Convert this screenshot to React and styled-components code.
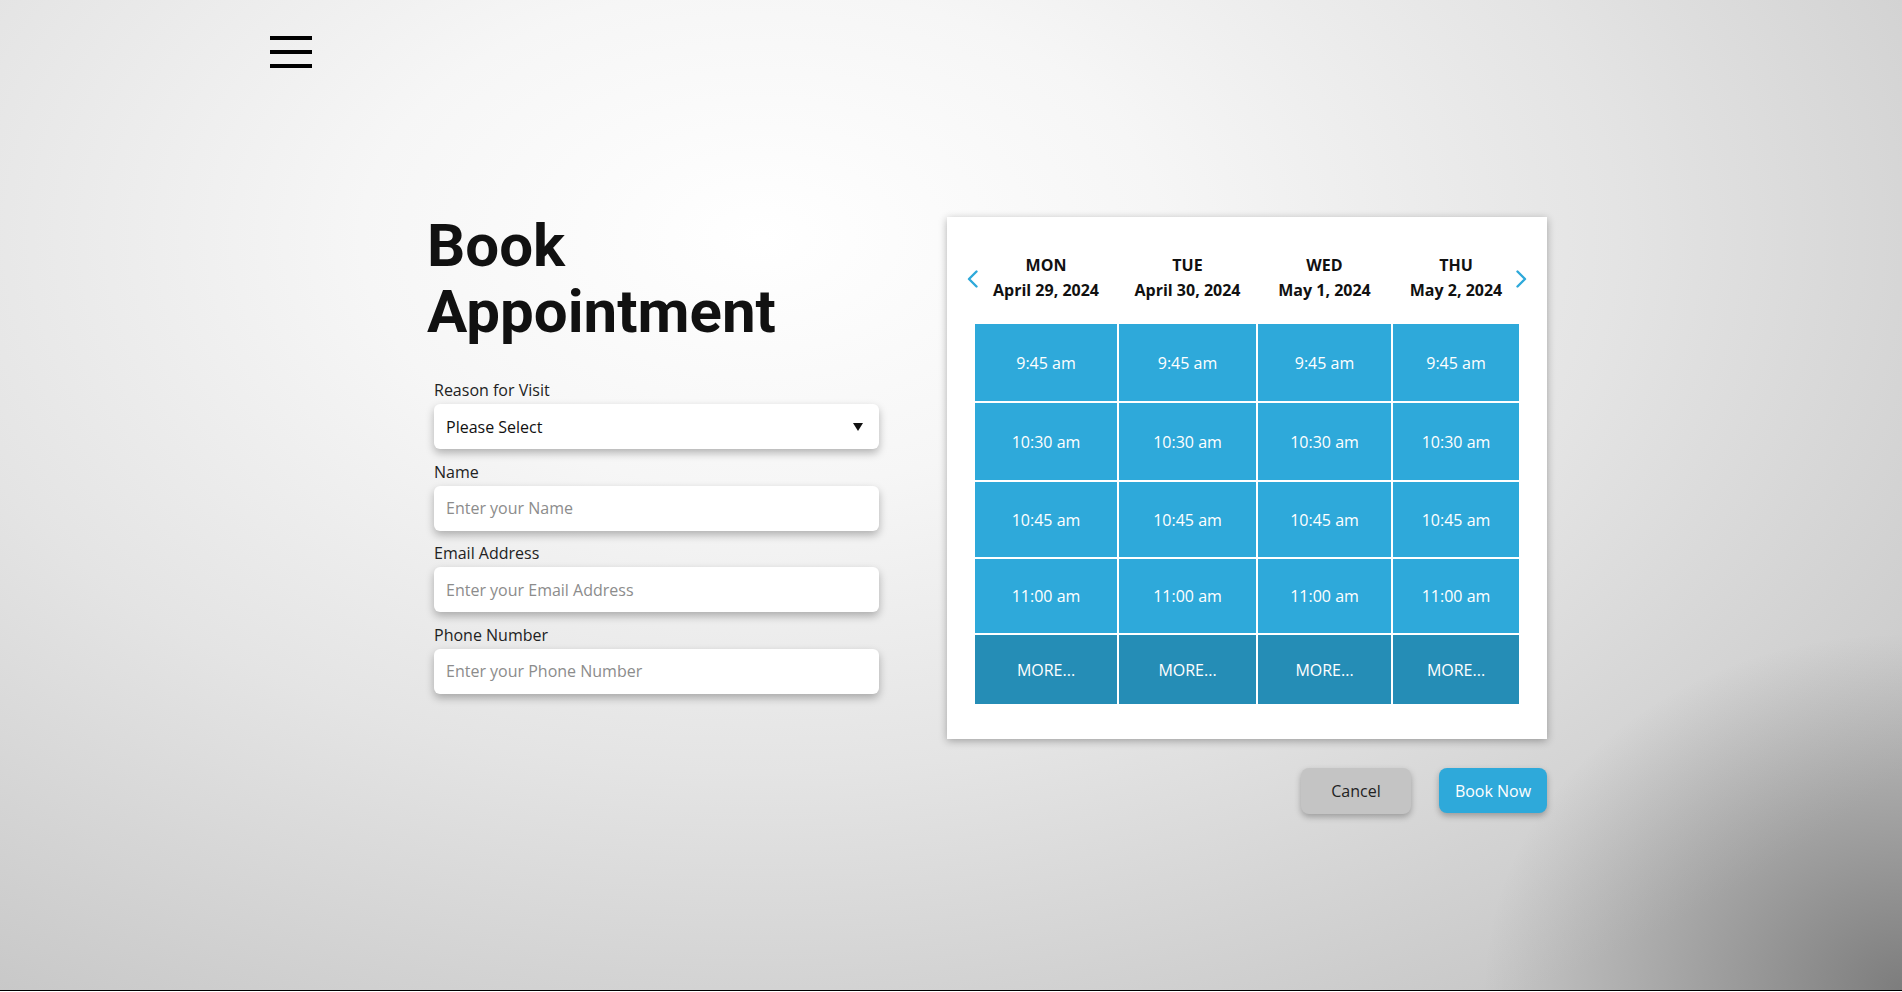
import React from 'react';
import styled, { createGlobalStyle } from 'styled-components';

const GlobalStyle = createGlobalStyle`
  * { box-sizing: border-box; }
  body {
    margin: 0;
    font-family: "Open Sans", "Liberation Sans", sans-serif;
    color: #1a1a1a;
  }
`;

const Page = styled.div`
  min-height: calc(100vh - 1px);
  border-bottom: 1px solid #000;
  background:
    radial-gradient(ellipse 22% 36% at 100% 100%, rgba(50, 50, 50, 0.5) 0%, rgba(50, 50, 50, 0) 100%),
    radial-gradient(ellipse 75% 90% at 40% 24%, #ffffff 0%, #f6f6f6 28%, #e4e4e4 60%, #c8c8c8 100%);
`;

const TopBar = styled.header`
  padding: 36px 0 0 270px;
`;

const MenuButton = styled.button`
  display: flex;
  flex-direction: column;
  gap: 10px;
  width: 42px;
  padding: 0;
  border: none;
  background: none;
  cursor: pointer;
`;

const MenuBar = styled.span`
  display: block;
  height: 4px;
  background: #000;
`;

const Main = styled.main`
  display: flex;
  align-items: flex-start;
  gap: 68px;
  margin: 149px 0 0 427px;
`;

const LeftCol = styled.section`
  width: 452px;
`;

const Title = styled.h1`
  margin: -4px 0 0;
  font-family: Roboto, "Liberation Sans", sans-serif;
  font-weight: 700;
  font-size: 60px;
  line-height: 66px;
  color: #111;
`;

const Form = styled.form`
  width: 445px;
  margin: 33px 0 0 7px;
`;

const Field = styled.div`
  margin-bottom: 10.5px;
`;

const Label = styled.label`
  display: block;
  margin-bottom: 2px;
  font-size: 16px;
  line-height: 24px;
  color: #222;
`;

const boxStyle = `
  width: 100%;
  height: 45px;
  border: none;
  border-radius: 6px;
  background: #fff;
  box-shadow: 0 4px 8px rgba(0, 0, 0, 0.28);
  font-family: "Open Sans", "Liberation Sans", sans-serif;
  font-size: 16px;
`;

const Input = styled.input`
  ${boxStyle}
  padding: 0 12px;
  color: #222;
  outline: none;

  &::placeholder {
    color: #8c8c8c;
  }
`;

const SelectBox = styled.div`
  ${boxStyle}
  display: flex;
  align-items: center;
  justify-content: space-between;
  padding: 0 16px 0 12px;
  color: #111;
  cursor: pointer;
`;

const Caret = styled.span`
  width: 0;
  height: 0;
  border-left: 5.5px solid transparent;
  border-right: 5.5px solid transparent;
  border-top: 8px solid #111;
`;

const RightCol = styled.section`
  display: flex;
  flex-direction: column;
  width: 600px;
`;

const Card = styled.div`
  position: relative;
  background: #fff;
  box-shadow: 0 2px 8px rgba(0, 0, 0, 0.3);
  padding: 36px 28px 35px;
`;

const Arrow = styled.button`
  position: absolute;
  top: 53px;
  ${(p) => (p.$side === 'left' ? 'left: 20px;' : 'right: 20px;')}
  padding: 0;
  border: none;
  background: none;
  cursor: pointer;
  line-height: 0;
`;

const Schedule = styled.div`
  display: grid;
  grid-template-columns: 142px 137px 133px 126px;
  grid-template-rows: auto 77px 77px 75px 74px 69px;
  gap: 2px;
`;

const DayHead = styled.div`
  margin-bottom: 19px;
  text-align: center;
  font-weight: 700;
  font-size: 16px;
  line-height: 25px;
  color: #111;
`;

const Slot = styled.button`
  display: flex;
  align-items: center;
  justify-content: center;
  border: none;
  padding: 0;
  background: ${(p) => (p.$more ? '#258db6' : '#2ea9da')};
  color: #fff;
  font-family: "Open Sans", "Liberation Sans", sans-serif;
  font-size: 16px;
  cursor: pointer;
`;

const ButtonRow = styled.div`
  display: flex;
  justify-content: flex-end;
  gap: 28px;
  margin-top: 29px;
`;

const ActionButton = styled.button`
  width: ${(p) => (p.$primary ? '108px' : '110px')};
  height: ${(p) => (p.$primary ? '45px' : '46px')};
  border: none;
  border-radius: 8px;
  background: ${(p) => (p.$primary ? '#2ea9da' : '#c4c4c4')};
  color: ${(p) => (p.$primary ? '#fff' : '#222')};
  box-shadow: 0 3px 6px rgba(0, 0, 0, 0.28);
  font-family: "Open Sans", "Liberation Sans", sans-serif;
  font-size: 16px;
  cursor: pointer;
`;

const days = [
  { day: 'MON', date: 'April 29, 2024' },
  { day: 'TUE', date: 'April 30, 2024' },
  { day: 'WED', date: 'May 1, 2024' },
  { day: 'THU', date: 'May 2, 2024' },
];

const times = ['9:45 am', '10:30 am', '10:45 am', '11:00 am'];

function Chevron({ dir }) {
  const pts = dir === 'left' ? '9.5,1.5 2,9 9.5,16.5' : '1.5,1.5 9,9 1.5,16.5';
  return (
    <svg width="11" height="18" viewBox="0 0 11 18">
      <polyline points={pts} fill="none" stroke="#2ea9da" strokeWidth="2.4" strokeLinecap="round" strokeLinejoin="round" />
    </svg>
  );
}

export default function App() {
  return (
    <>
      <GlobalStyle />
      <Page>
        <TopBar>
          <MenuButton aria-label="Menu">
            <MenuBar />
            <MenuBar />
            <MenuBar />
          </MenuButton>
        </TopBar>
        <Main>
          <LeftCol>
            <Title>
              Book
              <br />
              Appointment
            </Title>
            <Form onSubmit={(e) => e.preventDefault()}>
              <Field>
                <Label>Reason for Visit</Label>
                <SelectBox>
                  <span>Please Select</span>
                  <Caret />
                </SelectBox>
              </Field>
              <Field>
                <Label>Name</Label>
                <Input placeholder="Enter your Name" />
              </Field>
              <Field>
                <Label>Email Address</Label>
                <Input placeholder="Enter your Email Address" />
              </Field>
              <Field>
                <Label>Phone Number</Label>
                <Input placeholder="Enter your Phone Number" />
              </Field>
            </Form>
          </LeftCol>
          <RightCol>
            <Card>
              <Arrow $side="left" aria-label="Previous">
                <Chevron dir="left" />
              </Arrow>
              <Arrow $side="right" aria-label="Next">
                <Chevron dir="right" />
              </Arrow>
              <Schedule>
                {days.map((d) => (
                  <DayHead key={d.day}>
                    {d.day}
                    <br />
                    {d.date}
                  </DayHead>
                ))}
                {times.map((t) => days.map((d) => <Slot key={t + d.day}>{t}</Slot>))}
                {days.map((d) => (
                  <Slot key={'more' + d.day} $more>
                    MORE...
                  </Slot>
                ))}
              </Schedule>
            </Card>
            <ButtonRow>
              <ActionButton>Cancel</ActionButton>
              <ActionButton $primary>Book Now</ActionButton>
            </ButtonRow>
          </RightCol>
        </Main>
      </Page>
    </>
  );
}
